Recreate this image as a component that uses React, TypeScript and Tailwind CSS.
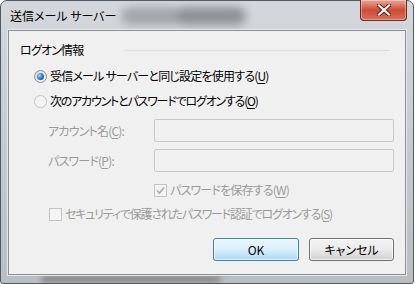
import React from "react";

const font = "font-['Noto_Sans_CJK_JP','Noto_Sans',sans-serif] [font-feature-settings:'palt']";

const Radio = ({ checked, disabled }: { checked?: boolean; disabled?: boolean }) => (
  <span
    className={`relative inline-flex h-[13px] w-[13px] shrink-0 items-center justify-center rounded-full border ${
      disabled ? "border-[#c4c4c4] bg-[#f4f4f4]" : "border-[#8e8f8f] bg-gradient-to-br from-[#d4d4d4] to-[#fafafa]"
    }`}
  >
    {checked && (
      <span className="h-[7px] w-[7px] rounded-full bg-[radial-gradient(circle_at_35%_35%,#9fd4ff,#2a74c8_55%,#0d3f85)]" />
    )}
  </span>
);

const Check = ({ checked }: { checked?: boolean }) => (
  <span className="inline-flex h-[13px] w-[13px] shrink-0 items-center justify-center border border-[#c4c4c4] bg-[#f4f4f4]">
    {checked && (
      <svg width="9" height="9" viewBox="0 0 9 9">
        <path d="M1 4.5 L3.5 7 L8 1.5" fill="none" stroke="#a9a9a9" strokeWidth="1.6" />
      </svg>
    )}
  </span>
);

const U = ({ children }: { children: React.ReactNode }) => <span className="underline underline-offset-2">{children}</span>;

export default function App() {
  return (
    <div className={`relative h-[284px] w-[415px] overflow-hidden bg-white ${font} text-[12px] leading-none text-black`}>
      {/* window frame */}
      <div className="relative flex h-[284px] w-[414px] flex-col rounded-t-[7px] rounded-b-[3px] border border-[#505a62] bg-gradient-to-b from-[#d4d8dc] via-[#c6cbcf] to-[#b9bec2] px-[7px] pb-[8px]">
        {/* blurred glass backdrop */}
        <div className="pointer-events-none absolute left-[120px] top-[6px] h-[18px] w-[60px] rounded-full bg-[#8d9297] opacity-70 blur-[5px]" />
        <div className="pointer-events-none absolute left-[175px] top-[6px] h-[18px] w-[70px] rounded-full bg-[#6f7479] opacity-70 blur-[5px]" />
        <div className="pointer-events-none absolute bottom-[1px] left-[40px] h-[6px] w-[180px] rounded-full bg-[#5b5f63] opacity-70 blur-[3px]" />

        {/* title bar */}
        <div className="relative flex h-[29px] items-center">
          <span className="ml-[2px] mt-[1px] text-[12px] text-black">送信メール サーバー</span>
          <div className="absolute right-[-1px] top-[-1px] flex h-[21px] w-[47px] items-center justify-center rounded-b-[4px] border border-t-0 border-[#6b2a20] bg-gradient-to-b from-[#e9a597] via-[#cc4a35] to-[#d8705c] shadow-[inset_0_0_0_1px_rgba(255,255,255,0.35)]">
            <svg width="14" height="12" viewBox="0 0 14 12">
              <path d="M2 1.5 L12 10.5 M12 1.5 L2 10.5" stroke="#5a1a10" strokeWidth="4" strokeLinecap="square" />
              <path d="M2 1.5 L12 10.5 M12 1.5 L2 10.5" stroke="#ffffff" strokeWidth="2.2" strokeLinecap="square" />
            </svg>
          </div>
        </div>

        {/* client area */}
        <div className="relative flex flex-1 flex-col border border-[#8a9096] bg-[#f0f0f0] tracking-[-0.8px] shadow-[0_0_0_1px_#e4e8ea]">
          {/* group header */}
          <div className="mt-[11px] flex h-[16px] items-center pl-[11px] pr-[15px]">
            <span>ログオン情報</span>
            <div className="ml-[42px] h-px flex-1 bg-[#d5dfe5]" />
          </div>

          <div className="mt-[10px] flex h-[16px] items-center gap-[3px] pl-[25px]">
            <Radio checked />
            <span>
              受信メール サーバーと同じ設定を使用する(<U>U</U>)
            </span>
          </div>
          <div className="mt-[9px] flex h-[16px] items-center gap-[3px] pl-[25px]">
            <Radio disabled />
            <span className="tracking-[-1.2px]">
              次のアカウントとパスワードでログオンする(<U>O</U>)
            </span>
          </div>

          <div className="mt-[10px] flex h-[23px] items-center pl-[39px] pr-[11px] text-[#9a9a9a]">
            <span className="w-[106px]">
              アカウント名(<U>C</U>):
            </span>
            <div className="h-[23px] flex-1 rounded-[2px] border border-[#c9c9c9] bg-[#f0f0f0]" />
          </div>
          <div className="mt-[7px] flex h-[23px] items-center pl-[39px] pr-[11px] text-[#9a9a9a]">
            <span className="w-[106px]">
              パスワード(<U>P</U>):
            </span>
            <div className="h-[23px] flex-1 rounded-[2px] border border-[#c9c9c9] bg-[#f0f0f0]" />
          </div>

          <div className="mt-[10px] flex h-[16px] items-center gap-[3px] pl-[145px] text-[#9a9a9a]">
            <Check checked />
            <span>
              パスワードを保存する(<U>W</U>)
            </span>
          </div>
          <div className="mt-[8px] flex h-[16px] items-center gap-[3px] pl-[40px] text-[#9a9a9a]">
            <Check />
            <span className="tracking-[-1.2px]">
              セキュリティで保護されたパスワード認証でログオンする(<U>S</U>)
            </span>
          </div>

          <div className="mt-[16px] flex justify-end gap-[10px] pr-[11px] tracking-normal">
            <button className="flex h-[23px] w-[86px] items-center justify-center rounded-[3px] border border-[#3c7fb1] bg-gradient-to-b from-[#eaf6fd] via-[#d9f0fc] to-[#a7d9f5] shadow-[inset_0_0_0_1px_rgba(255,255,255,0.7)]">
              OK
            </button>
            <button className="flex h-[23px] w-[85px] items-center justify-center rounded-[3px] border border-[#707070] bg-gradient-to-b from-[#f2f2f2] via-[#ebebeb] to-[#cfcfcf] shadow-[inset_0_0_0_1px_rgba(255,255,255,0.7)]">
              キャンセル
            </button>
          </div>
        </div>
      </div>
    </div>
  );
}
